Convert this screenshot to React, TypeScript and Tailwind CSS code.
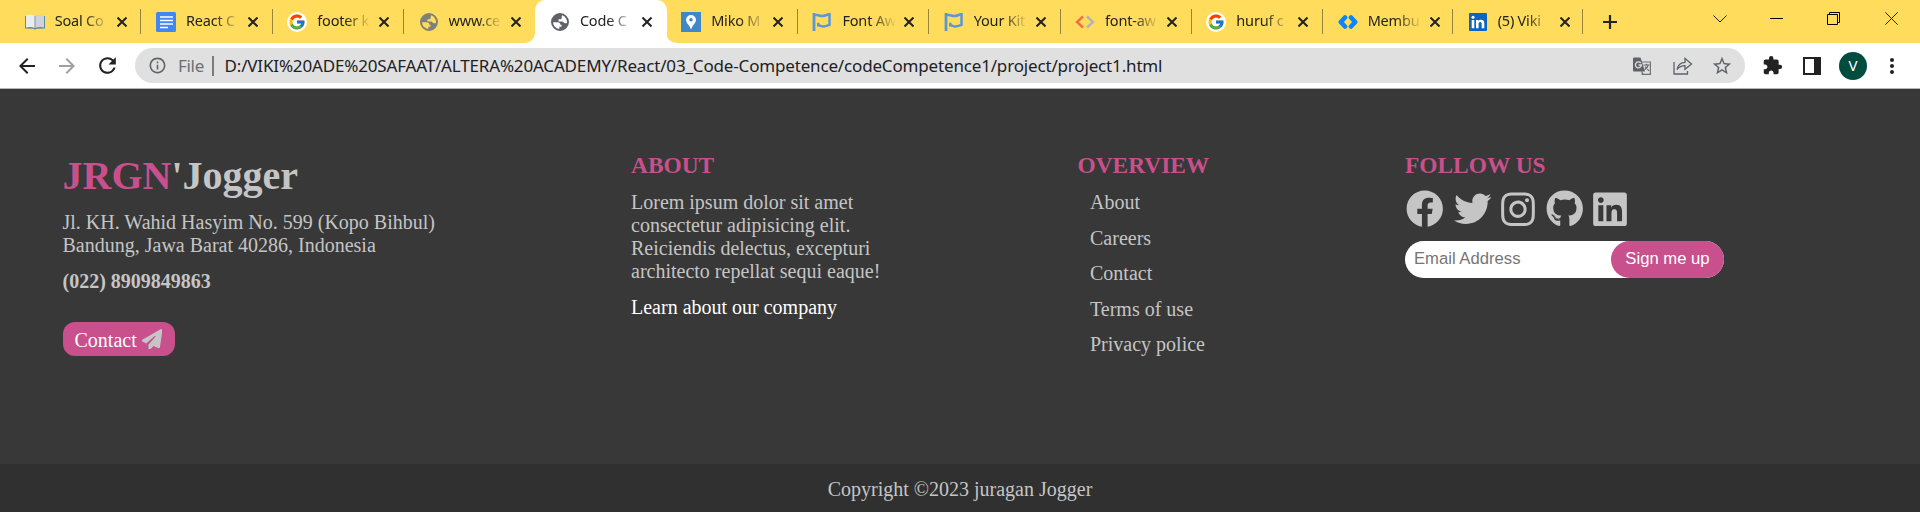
import type { ReactNode } from "react";
import { FaFacebook, FaTwitter, FaInstagram, FaGithub, FaLinkedin } from "react-icons/fa";
import { FaPaperPlane } from "react-icons/fa6";
import { FcGoogle } from "react-icons/fc";
import { MdExtension, MdStarBorder, MdInfoOutline, MdMoreVert, MdRefresh, MdArrowBack, MdArrowForward } from "react-icons/md";

function BookIcon() {
  return (
    <svg viewBox="0 0 20 20" className="size-5">
      <path d="M0 4h20v12.500l-8.500 .3-1.500 1-1.500-1L0 16.500z" fill="#5b87a8" />
      <path d="M1 3.500Q6 2 10 4v12Q6 14.500 1 15.500z" fill="#e9ecf0" />
      <path d="M10 4q4-2 9-.5v12q-5-1-9 .5z" fill="#cdd3da" />
      <path d="M10 4v12" stroke="#8995a3" strokeWidth="1" />
    </svg>
  );
}

function DocsIcon() {
  return (
    <svg viewBox="0 0 20 20" className="size-5">
      <rect width="20" height="20" rx="1.500" fill="#4285f4" />
      <path d="M4 5h13M4 8.500h13M4 12h13M4 15.500h8" stroke="#fff" strokeWidth="1.700" />
    </svg>
  );
}

function GoogleIcon() {
  return (
    <span className="flex size-5 items-center justify-center rounded-full bg-white">
      <FcGoogle className="size-[18px]" />
    </span>
  );
}

function GlobeIcon({ color }: { color: string }) {
  return (
    <svg viewBox="0 0 18 18" className="size-[18px]">
      <path
        fill={color}
        fillRule="evenodd"
        d="M9 0a9 9 0 1 0 0 18A9 9 0 0 0 9 0zM2 9.300h4.500c2 0 2.800 1 2.800 2.500h1.200v2H8.300V16A7 7 0 0 1 2 9.300zM11 2.300A7 7 0 0 1 15.900 10c-.9.5-1.900.4-2.900-.3-.6-.5-1.200-1.200-2.300-1.200H7.500V6.200h1.800c.9 0 1.300-.5 1.300-1.300z"
      />
    </svg>
  );
}

function PinIcon() {
  return (
    <svg viewBox="0 0 20 20" className="size-5">
      <rect width="20" height="20" fill="#3f87c9" />
      <path d="M10 3a5 5 0 0 0-5 5c0 3 3.500 5 5 9.500C11.500 13 15 11 15 8a5 5 0 0 0-5-5z" fill="#fff" />
      <circle cx="10" cy="7.700" r="1.800" fill="#3f87c9" />
    </svg>
  );
}

function FlagIcon() {
  return (
    <svg viewBox="0 0 20 20" className="size-5" fill="none" stroke="#5b96d8" strokeWidth="2.500">
      <path d="M2 1v18" strokeWidth="2.800" />
      <path d="M2 3h3c2 0 2.500 1 5 1 3.200 0 4-1.200 7.500-1.700v10.500c-3 1.200-4 1.700-6 1.700-2.400 0-3.200-1.300-5.200-1.300v-2.400" />
    </svg>
  );
}

function CodeIcon() {
  return (
    <svg viewBox="0 0 20 20" className="size-5" fill="none" strokeWidth="2.400">
      <path d="M8 4.500 2 10l6 5.500" stroke="#f0704a" />
      <path d="m12 4.500 6 5.500-6 5.500" stroke="#b3b3b3" />
    </svg>
  );
}

function DicodingIcon() {
  return (
    <svg viewBox="0 0 20 20" className="size-5" fill="none" strokeWidth="4.600" strokeLinecap="round" strokeLinejoin="round">
      <path d="M7 5.500 2.800 10 7 14.500" stroke="#0a84ff" />
      <path d="M13 5.500 17.200 10 13 14.500" stroke="#0a84ff" />
    </svg>
  );
}

function LinkedinTabIcon() {
  return (
    <svg viewBox="0 0 18 18" className="size-[18px]">
      <rect width="18" height="18" rx="1" fill="#0a66c2" />
      <path d="M2.700 7h2.600v8.200H2.700zM7 7h2.500v1.200c.5-.9 1.400-1.400 2.600-1.400 2.500 0 3.200 1.500 3.200 3.900v4.500h-2.600V11c0-1.200-.2-2.100-1.400-2.100-1.300 0-1.700.9-1.700 2.100v4.200H7z" fill="#fff" />
      <circle cx="4" cy="4.300" r="1.500" fill="#fff" />
    </svg>
  );
}

function TranslateIcon() {
  return (
    <svg viewBox="0 0 18 18" className="size-[18px]">
      <path d="M6 5h11.400v12.400H8.500" fill="none" stroke="#6f7276" strokeWidth="1.200" />
      <path d="M0 1.500Q0 .5 1 .5h6.500L12 14.500H1q-1 0-1-1z" fill="#5f6368" />
      <path d="M7.800 6A3 3 0 1 0 8.400 8H5.600" fill="none" stroke="#e0e0e0" strokeWidth="1.300" />
      <path d="M10.500 8h6M13.500 6.700V8M15.300 8c-.6 2-2 3.700-3.700 4.800M12 9.500l4 4.300M8.500 14.500l1.700 3" fill="none" stroke="#5f6368" strokeWidth="1.100" />
    </svg>
  );
}

type TabData = { title: string; icon: ReactNode; width?: string; active?: boolean; sep?: boolean };

const tabs: TabData[] = [
  { title: "Soal Co", icon: <BookIcon />, sep: true },
  { title: "React C", icon: <DocsIcon />, sep: true },
  { title: "footer k", icon: <GoogleIcon />, sep: true },
  { title: "www.ce", icon: <GlobeIcon color="#80807a" /> },
  { title: "Code C", icon: <GlobeIcon color="#5f6368" />, active: true },
  { title: "Miko M", icon: <PinIcon />, sep: true },
  { title: "Font Aw", icon: <FlagIcon />, sep: true },
  { title: "Your Kit", icon: <FlagIcon />, sep: true },
  { title: "font-aw", icon: <CodeIcon />, sep: true },
  { title: "huruf c", icon: <GoogleIcon />, sep: true },
  { title: "Membu", icon: <DicodingIcon />, sep: true, width: "w-[130px]" },
  { title: "(5) Viki", icon: <LinkedinTabIcon />, sep: true, width: "w-[130px]" },
];

function Tab({ title, icon, active, sep, width = "w-[131.300px]" }: TabData) {
  return (
    <div className={`relative flex h-[43px] shrink-0 items-center pl-[14.500px] ${width} ${active ? "rounded-t-[10px] bg-white" : ""}`}>
      {active && (
        <svg viewBox="0 0 151.300 10" className="absolute bottom-0 -left-[10px] h-[10px] w-[151.300px]" fill="#fff">
          <path d="M0 10A10 10 0 0 0 10 0V10zM151.300 10A10 10 0 0 1 141.300 0V10z" />
        </svg>
      )}
      <span className="flex size-5 shrink-0 items-center justify-center">{icon}</span>
      <span className="ml-[10px] w-[57px] pb-[2px] whitespace-nowrap font-['Noto_Sans',sans-serif] text-[14.500px] tracking-[-0.200px] text-[#222] [mask-image:linear-gradient(to_right,#000_50%,transparent_95%)]">
        {title}
      </span>
      <svg viewBox="0 0 10 10" className="ml-[5px] size-[10px]" stroke="#222" strokeWidth="2">
        <path d="M.5.5l9 9M9.500.500l-9 9" />
      </svg>
      {sep && <span className="absolute right-0 top-[9px] h-[25px] w-px bg-[#97843e]" />}
    </div>
  );
}

function TabStrip() {
  return (
    <div className="flex h-[43px] items-center bg-[#ffdc5c] pl-[10.200px]">
      {tabs.map((t) => (
        <Tab key={t.title} {...t} />
      ))}
      <svg viewBox="0 0 14 14" className="ml-[20px] size-[14px]" stroke="#222" strokeWidth="2.200">
        <path d="M7 0v14M0 7h14" />
      </svg>
      <div className="ml-auto flex items-center pr-[22px] pb-[6px]">
        <svg viewBox="0 0 14 8" className="mr-[43px] h-2 w-[14px]" fill="none" stroke="#222">
          <path d="M.5.5 7 7 13.500.500" />
        </svg>
        <svg viewBox="0 0 13 13" className="mr-[44px] size-[13px]" stroke="#000">
          <path d="M0 6.500h13" />
        </svg>
        <svg viewBox="0 0 13 13" className="mr-[45px] size-[13px]" fill="none" stroke="#000">
          <path d="M.5 2.500h10v10H.5zM2.500 2.500V.5h10v10h-2" />
        </svg>
        <svg viewBox="0 0 13 13" className="size-[13px]" stroke="#222">
          <path d="M.3.3l12.400 12.400M12.700.300.300 12.700" />
        </svg>
      </div>
    </div>
  );
}

function Toolbar() {
  return (
    <div className="flex h-[46px] items-center border-b border-[#b5b5b5] bg-white text-[#222]">
      <MdArrowBack className="ml-[15px] size-6 text-[#222]" />
      <MdArrowForward className="ml-4 size-6 text-[#a0a0a0]" />
      <MdRefresh className="ml-4 size-[25px]" />
      <div className="ml-[15px] flex h-[35px] w-[1610px] items-center rounded-full bg-[#e0e0e0] pl-[13px] pr-[12px]">
        <MdInfoOutline className="size-[19px] text-[#5f6368]" />
        <span className="ml-[11px] w-[26px] font-['Noto_Sans',sans-serif] text-[17px] tracking-[-0.300px] text-[#6b6f73]">File</span>
        <span className="ml-[8px] h-5 w-[1.500px] bg-[#7b7b7b]" />
        <span className="ml-[11px] whitespace-nowrap font-['Noto_Sans',sans-serif] text-[17px] tracking-[-0.165px] text-[#202124]">
          D:/VIKI%20ADE%20SAFAAT/ALTERA%20ACADEMY/React/03_Code-Competence/codeCompetence1/project/project1.html
        </span>
        <div className="ml-auto flex items-center text-[#5f6368]">
          <TranslateIcon />
          <svg viewBox="0 0 20 18" className="mr-[18px] ml-[22px] h-[18px] w-5" fill="none" stroke="#5f6368" strokeWidth="1.300">
            <path d="M1 5v12h13.500v-3M4 12.500C5 8 8 5.500 12 5.300V1.500L18.500 7 12 12.300V8.700C8.500 8.700 6 10 4 12.500z" />
          </svg>
          <MdStarBorder className="size-[22px]" />
        </div>
      </div>
      <MdExtension className="ml-[17px] size-[21px]" />
      <svg viewBox="0 0 18 18" className="ml-[20px] size-[18px]">
        <path d="M1 1h16v16H1z" fill="none" stroke="#222" strokeWidth="2" />
        <path d="M11 0h7v18h-7z" fill="#222" />
      </svg>
      <span className="ml-[18px] flex size-7 items-center justify-center rounded-full bg-[#004d40] font-['Noto_Sans',sans-serif] text-[15px] text-white">V</span>
      <MdMoreVert className="ml-[13px] size-6" />
    </div>
  );
}

function Heading({ children }: { children: ReactNode }) {
  return <h3 className="h-[27px] text-[23.400px] leading-[27px] font-bold text-[#c8508c]">{children}</h3>;
}

function Footer() {
  return (
    <footer className="font-['Liberation_Serif',serif] text-[20px] leading-[23px] text-[#c5c5c5]">
      <div className="grid h-[375px] grid-cols-[568.500px_446.500px_327.500px_1fr] bg-[#383838] pt-[63px] pl-[62.500px]">
        <div className="pt-px">
          <h1 className="text-[40px] leading-[46px] font-bold">
            <span className="text-[#c8508c]">JRGN</span>'Jogger
          </h1>
          <p className="mt-[12px]">
            Jl. KH. Wahid Hasyim No. 599 (Kopo Bihbul)
            <br />
            Bandung, Jawa Barat 40286, Indonesia
          </p>
          <p className="mt-[13px] font-bold">(022) 8909849863</p>
          <button className="mt-[29px] flex h-[34px] w-[112px] items-center rounded-[12px] bg-[#c8508c] pl-[12px] text-white">
            <span className="pt-[2px]">Contact</span>
            <FaPaperPlane className="ml-[5px] size-[20.500px] text-[#c5c5c5]" />
          </button>
        </div>
        <div>
          <Heading>ABOUT</Heading>
          <p className="mt-[12px]">
            Lorem ipsum dolor sit amet
            <br />
            consectetur adipisicing elit.
            <br />
            Reiciendis delectus, excepturi
            <br />
            architecto repellat sequi eaque!
          </p>
          <p className="mt-[13px] text-white">Learn about our company</p>
        </div>
        <div>
          <Heading>OVERVIEW</Heading>
          <ul className="mt-[12px] flex flex-col gap-[12.500px] pl-[12.500px]">
            <li>About</li>
            <li>Careers</li>
            <li>Contact</li>
            <li>Terms of use</li>
            <li>Privacy police</li>
          </ul>
        </div>
        <div>
          <Heading>FOLLOW US</Heading>
          <div className="mt-[11px] flex h-[38px] items-center gap-[10.300px] pl-[0.800px]">
            <FaFacebook className="size-[37.500px]" />
            <FaTwitter className="size-[37.500px]" />
            <FaInstagram className="h-[38.500px] w-[34px]" />
            <FaGithub className="size-[37.500px]" />
            <FaLinkedin className="h-[38.500px] w-[34px]" />
          </div>
          <form className="mt-[13px] flex h-[37px] w-[319px] rounded-full bg-white font-['Liberation_Sans',sans-serif] text-[16.670px]">
            <input placeholder="Email Address" className="min-w-0 flex-1 rounded-full pb-[2px] pl-[9px] outline-none placeholder:text-[#757575]" />
            <button type="button" className="w-[113px] rounded-full bg-[#c8508c] pb-[2px] text-white">
              Sign me up
            </button>
          </form>
        </div>
      </div>
      <div className="flex h-[48px] items-center justify-center bg-[#303030] pt-[2px]">Copyright ©2023 juragan Jogger</div>
    </footer>
  );
}

export default function App() {
  return (
    <div className="h-[516px] w-[1920px] overflow-hidden bg-white">
      <TabStrip />
      <Toolbar />
      <Footer />
    </div>
  );
}
